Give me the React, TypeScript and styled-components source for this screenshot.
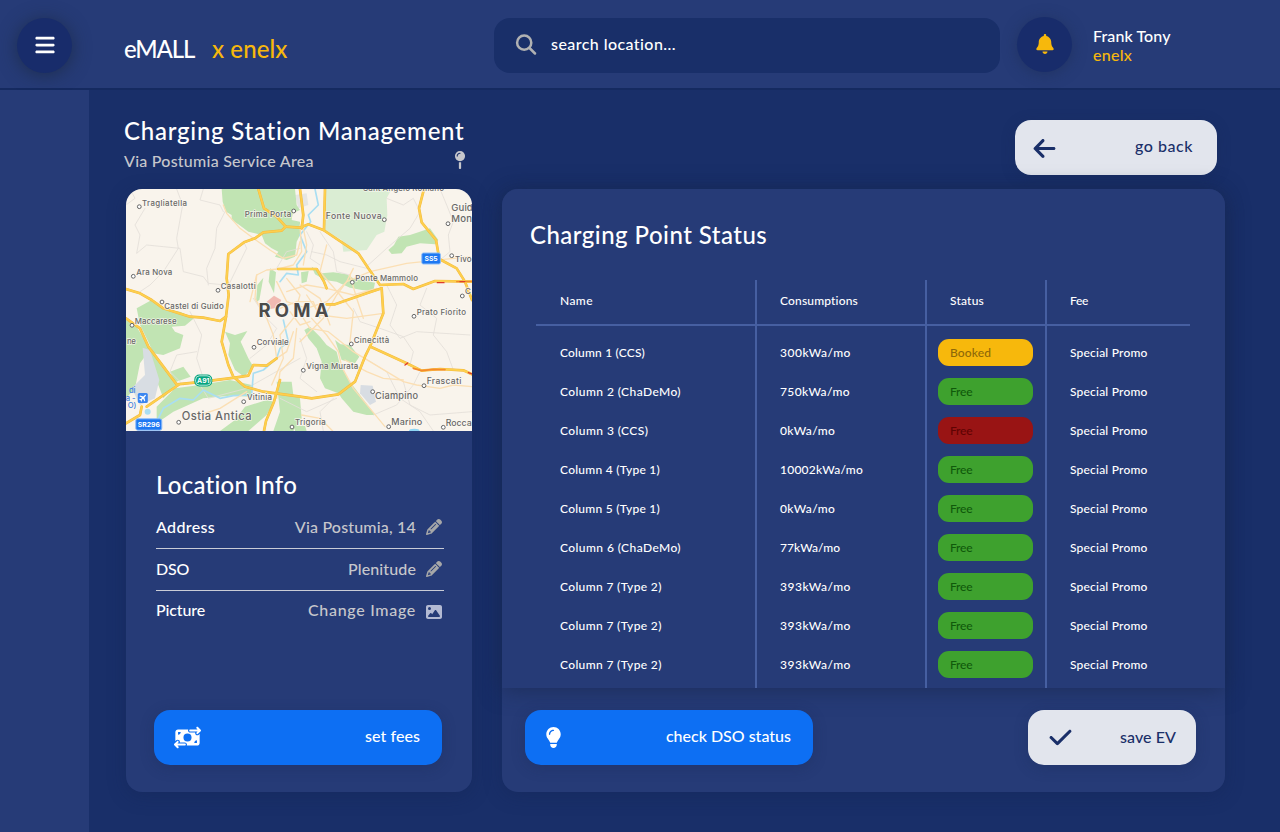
import React from 'react';
import styled, { createGlobalStyle, css } from 'styled-components';
import {
  FaBars,
  FaBell,
  FaArrowLeft,
  FaMapPin,
  FaPencil,
  FaImage,
  FaMoneyBillTransfer,
  FaLightbulb,
  FaCheck,
} from 'react-icons/fa6';

const color = {
  page: '#192f69',
  panel: '#263b77',
  disc: '#182c6b',
  blue: '#0d6ff3',
  light: '#e2e5ed',
  yellow: '#f7b80c',
  green: '#3ea12e',
  red: '#991414',
  line: '#465fa1',
  muted: '#c6c7cc',
};

const GlobalStyle = createGlobalStyle`
  * { box-sizing: border-box; }
  body {
    margin: 0;
    background: ${color.page};
    color: #fff;
    font-family: Lato, 'Open Sans', sans-serif;
    font-weight: 500;
    font-variant-ligatures: none;
    overflow: hidden;
  }
  svg { display: block; flex: none; }
`;

const Screen = styled.div`
  display: flex;
  flex-direction: column;
  width: 1280px;
  height: 832px;
`;

/* Header */

const Header = styled.header`
  display: flex;
  align-items: flex-start;
  height: 90px;
  padding: 17px 0 0 17px;
  background: ${color.panel};
  border-bottom: 2px solid #152a60;
`;

const RoundButton = styled.button<{ $strong?: boolean; $tint?: string }>`
  display: flex;
  align-items: center;
  justify-content: center;
  width: 55px;
  height: 55px;
  padding: 0 0 1px;
  border: 0;
  border-radius: 50%;
  background: ${color.disc};
  color: ${p => p.$tint ?? '#fff'};
  ${p =>
    p.$strong
      ? css`
          margin-top: 1px;
          padding-bottom: 2px;
          box-shadow: 0 2px 18px rgba(28, 44, 72, 0.85);
        `
      : css`
          box-shadow: 0 2px 14px rgba(28, 44, 80, 0.5);
        `}
`;

const Brand = styled.div`
  display: flex;
  width: 370px;
  margin: 17px 0 0 52px;
  font-size: 24px;
  line-height: 30px;
`;

const BrandName = styled.span`
  width: 88px;
  letter-spacing: -1.1px;
`;

const BrandPartner = styled.span`
  color: ${color.yellow};
  letter-spacing: 0.1px;
`;

const SearchBox = styled.label`
  display: flex;
  align-items: center;
  width: 506px;
  height: 55px;
  margin: 1px 17px 0 0;
  padding: 0 0 2px 21px;
  gap: 14px;
  border-radius: 16px;
  background: ${color.page};
  font-size: 16px;
  line-height: 20px;
  letter-spacing: 0.43px;
`;

const SearchHint = styled.span`
  padding-bottom: 1px;
`;

const User = styled.div`
  margin: 9px 0 0 21px;
  font-size: 16px;
  line-height: 19px;
`;

const UserName = styled.div`
  letter-spacing: 0.1px;
`;

const UserCompany = styled.div`
  color: ${color.yellow};
  letter-spacing: 0.26px;
`;

/* Page */

const Body = styled.div`
  display: flex;
  flex: 1;
`;

const Sidebar = styled.aside`
  width: 89px;
  background: ${color.panel};
`;

const Main = styled.main`
  flex: 1;
  padding: 26px 55px 0 37px;
`;

const TitleBar = styled.div`
  display: flex;
  justify-content: space-between;
  height: 73px;
  padding-right: 8px;
`;

const TitleBlock = styled.div`
  width: 342px;
  margin-left: -2px;
`;

const PageTitle = styled.h1`
  margin: 0;
  font-size: 24px;
  font-weight: 500;
  line-height: 30px;
  letter-spacing: 0.76px;
  white-space: nowrap;
`;

const Subtitle = styled.div`
  display: flex;
  align-items: center;
  justify-content: space-between;
  margin-top: 5px;
  color: ${color.muted};
  font-size: 16px;
  line-height: 20px;
  letter-spacing: 0.24px;

  svg { margin: -3px -3px 0 0; }
`;

const GoBackSlot = styled.div`
  padding-top: 4px;
`;

const Button = styled.button<{ $tone: 'blue' | 'light'; $width: number; $track?: number; $pad?: string }>`
  display: flex;
  align-items: center;
  justify-content: space-between;
  width: ${p => p.$width}px;
  height: 55px;
  padding: ${p => p.$pad ?? '0 22px 0 20px'};
  border: 0;
  border-radius: 16px;
  background: ${p => (p.$tone === 'blue' ? color.blue : color.light)};
  color: ${p => (p.$tone === 'blue' ? '#fff' : '#1a2f69')};
  box-shadow: 0 3px 14px rgba(24, 40, 84, 0.3);
  font: 500 16px/20px Lato, sans-serif;
  letter-spacing: ${p => p.$track ?? 0}px;
`;

const ButtonLabel = styled.span<{ $lift?: number }>`
  padding-bottom: ${p => p.$lift ?? 3}px;
`;

const Panels = styled.div`
  display: flex;
  gap: 30px;
`;

const SectionTitle = styled.h2<{ $track: number }>`
  margin: 0;
  font-size: 24px;
  font-weight: 500;
  line-height: 30px;
  letter-spacing: ${p => p.$track}px;
`;

/* Location panel */

const LocationPanel = styled.section`
  width: 346px;
  height: 603px;
  border-radius: 16px;
  background: ${color.panel};
  box-shadow: 0 4px 18px rgba(20, 38, 84, 0.4);
`;

const MapFrame = styled.div`
  height: 242px;
  overflow: hidden;
  border-radius: 16px 16px 0 0;
`;

const LocationContent = styled.div`
  display: flex;
  flex-direction: column;
  height: 361px;
  padding: 39px 28px 27px 30px;
`;

const InfoList = styled.div`
  flex: 1;
  margin-top: 7px;
`;

const InfoRow = styled.div`
  display: flex;
  align-items: center;
  height: 42px;
  padding: 0 2px 1px 0;
  border-bottom: 1px solid #c9ccd6;
  font-size: 16px;
  line-height: 20px;

  &:last-child {
    padding-bottom: 4px;
    border-bottom: 0;
  }

  &:last-child svg { margin-top: 3px; }
`;

const InfoLabel = styled.span<{ $track: number }>`
  flex: 1;
  letter-spacing: ${p => p.$track}px;
`;

const InfoValue = styled.span<{ $track: number }>`
  margin-right: 10px;
  color: ${color.muted};
  letter-spacing: ${p => p.$track}px;
`;

const EditIcon = styled.span<{ $tint: string }>`
  color: ${p => p.$tint};
`;

const FeesAction = styled.div`
  margin-left: -2px;
`;

/* Status panel */

const StatusPanel = styled.section`
  width: 723px;
  height: 603px;
  border-radius: 16px;
  background: ${color.panel};
  box-shadow: 0 4px 18px rgba(20, 38, 84, 0.4);
`;

const StatusCard = styled.div`
  height: 499px;
  padding: 31px 35px 0 28px;
  border-radius: 16px 16px 0 0;
  background: ${color.panel};
  box-shadow: 0 2px 22px rgba(23, 38, 76, 0.65);
`;

const Table = styled.div`
  width: 654px;
  margin: 30px 0 0 6px;
`;

const TableRow = styled.div<{ $kind?: 'head' | 'first' | 'last' }>`
  display: grid;
  grid-template-columns: 221px 170px 120px 143px;
  height: 39px;
  font-size: 12px;
  line-height: 16px;

  ${p => p.$kind === 'head' && css`
    height: 46px;
    border-bottom: 2px solid ${color.line};
    & > * { padding-bottom: 2px; }
  `}
  ${p => p.$kind === 'first' && css`
    height: 46px;
    & > * { padding-top: 7px; }
  `}
  ${p => p.$kind === 'last' && css`
    height: 43px;
    & > * { padding-bottom: 4px; }
  `}
`;

const Cell = styled.div<{ $track?: number; $inset?: number }>`
  display: flex;
  align-items: center;
  padding-left: ${p => p.$inset ?? 23}px;
  border-right: 2px solid ${color.line};
  letter-spacing: ${p => p.$track ?? 0.2}px;
  white-space: nowrap;

  &:last-child { border-right: 0; }
`;

const Pill = styled.span<{ $tone: 'green' | 'yellow' | 'red' }>`
  width: 95px;
  height: 27px;
  padding: 6px 12px;
  border-radius: 11px;
  background: ${p => color[p.$tone]};
  color: ${p => ({ green: '#10590b', yellow: '#8e6808', red: '#5f0303' })[p.$tone]};
  letter-spacing: ${p => (p.$tone === 'yellow' ? 0.12 : -0.2)}px;
`;

const Actions = styled.div`
  display: flex;
  justify-content: space-between;
  padding: 22px 29px 0 23px;
`;

/* Map */

const MapSvg = styled.svg`
  font-family: Inter, sans-serif;
  font-weight: 500;
`;

type Place = [name: string, x: number, y: number, width: number, size: number, dotX?: number, dotY?: number];

const places: Place[] = [
  ['Tragliatella', 16, 16.8, 45, 7.9, 13.3, 17.7],
  ['Prima Porta', 118.7, 28, 46.5, 7.9, 167.7, 22],
  ['Ara Nova', 10.3, 86, 36, 7.9, 7.3, 87.3],
  ['Casalotti', 94.7, 100, 35, 7.9, 92, 101.3],
  ['Castel di Guido', 38.3, 119.6, 59.4, 7.9, 36, 113],
  ['Fonte Nuova', 199.7, 29.7, 56, 8.6, 258.3, 30.7],
  ["Sant'Angelo Romano", 237, 1.8, 81, 8],
  ['Guid', 325.3, 22.3, 21.5, 9.6],
  ['Mon', 325.3, 32.5, 20.7, 9.6, 322, 34.7],
  ['Tivo', 329, 73.3, 16.5, 8, 325.7, 66.7],
  ['Ponte Mammolo', 229.3, 91.7, 62.7, 7.9, 226.3, 93.3],
  ['C', 339, 104.7, 6, 8, 336.3, 107],
  ['Prato Fiorito', 290.7, 125.7, 49.3, 7.9, 288, 127.3],
  ['Cinecittà', 227.7, 153.7, 35.6, 7.9, 225.3, 155],
  ['Vigna Murata', 180.3, 179.7, 52, 7.9, 177.3, 181.3],
  ['Frascati', 300.7, 194.7, 34.6, 8.6, 298, 196.7],
  ['Ciampino', 249, 210, 43, 9.2, 246.7, 202.7],
  ['Marino', 265.3, 236, 31, 9, 262.7, 237.7],
  ['Rocca', 319.7, 236.8, 26, 8.8, 317.3, 238.3],
  ['Trigoria', 169, 236, 30.7, 7.9, 166, 238],
  ['Maccarese', 8.7, 134.7, 42, 7.9, 6, 136.3],
  ['ne', 1, 155.3, 9, 7.9],
  ['Corviale', 130.7, 156.3, 32, 7.9, 128, 158.3],
  ['Vitinia', 121, 210.6, 25, 7.9, 117.7, 212.7],
  ['Ostia Antica', 55.7, 230.8, 70, 11.2, 52.7, 233.3],
];

const woods = [
  '305,12 308,50 318,80 335,90 335,105 355,118 385,140 425,150 435,175 455,190 475,200 465,215 500,225 525,215 530,170 540,150 540,110 515,105 518,85 540,75 530,60 525,12',
  '805,195 822,180 835,155 870,150 895,142 930,130 955,165 945,178 900,175 860,185 845,205 815,207',
  '575,245 605,265 640,262 680,268 700,280 765,293 760,318 725,315 690,308 650,290 615,285 585,268',
  '543,262 566,258 560,290 545,295',
  '450,250 468,262 462,325 446,290',
  '430,278 418,345 408,352 412,300',
  '50,370 95,345 130,372 180,380 222,400 195,422 155,425 165,440 190,450 180,490 130,510 100,505 85,470 60,420',
  '18,405 50,425 85,485 170,598 130,640 100,560 85,500 60,535 45,610 18,640',
  '150,560 190,545 212,575 165,592',
  '315,440 345,450 382,438 362,470 385,520 400,545 372,575 345,555 325,510 330,475',
  '110,665 165,610 240,600 330,585 395,600 395,635 330,632 250,640 160,680 110,715',
  '300,738 345,705 375,665 440,645 462,650 440,690 385,738',
  '470,590 515,590 520,630 540,640 545,700 520,738 460,738 480,680',
  '553,435 570,425 600,455 620,480 650,500 660,540 690,590 765,690 740,690 700,680 665,640 655,625 615,610 600,580 605,530 590,490 565,460',
  '645,465 662,478 690,480 718,515 705,535 665,525',
  '525,722 555,722 560,738 525,738',
];

const lanes = [
  '75,70 45,120 60,150 50,205 80,180 130,185 180,190 190,260 250,275 265,295 318,300',
  '170,12 188,60 170,160 175,190 130,260 90,300 60,320',
  '315,80 290,130 285,190 260,250 265,300',
  '250,12 240,45 300,60 310,80',
  '326,300 380,190 372,172',
  '210,380 245,450 230,520 250,580',
  '230,500 170,510 150,560 190,600',
  '240,600 265,640 380,610 540,520',
  '30,12 45,40 18,60',
  '800,40 850,60 880,40 900,80 870,130 800,190 745,240',
  '960,12 980,60 1000,110 985,150 990,200 960,225',
  '800,300 830,360 810,420 840,460 890,440 1050,450',
  '920,310 900,360 950,400 940,450 980,500 1000,555',
  '700,370 720,410 780,430 850,455 880,500 870,540',
  '735,520 800,560 840,640 900,680 940,738',
  '640,640 600,680 610,738',
  '760,690 830,660 880,600 900,560',
  '850,590 870,660 930,690 1056,680',
  '560,140 580,180 570,220 600,240',
  '600,140 640,200 650,260 690,270',
  '575,200 620,210 660,230 740,250',
  '480,640 560,680 650,640',
  '400,340 440,400 470,430 440,480 390,520',
  '540,460 560,520 540,580 590,620',
  '470,250 500,200 540,190',
];

const streets = [
  '310,60 320,85 360,130 400,160 450,195 490,220 530,210 540,170',
  '390,350 410,270 440,255 475,252 520,240 545,200 540,120',
  '410,270 405,340 440,400 460,450 470,520 500,500 520,440',
  '575,400 620,450 655,500 665,545 700,610 795,725',
  '550,400 570,430 625,440 700,500 775,545 850,590 890,600 960,610 1000,600 1056,605',
  '675,525 740,560 790,580 850,585',
  '470,290 500,350 560,370 620,350 680,290 750,260 860,235 1050,215',
  '500,320 560,300 620,310 700,330 770,310',
  '500,280 540,330 520,400 480,450 490,520 455,600',
  '560,330 600,390 680,400 790,385',
  '620,180 600,260 660,330 700,380 690,470',
  '690,270 710,340 730,400',
  '540,300 600,340 630,420',
  '480,370 530,350 580,350 600,400',
  '510,380 540,420 570,410',
  '545,60 550,130 560,180 550,240',
  '700,250 680,290 650,330 610,400 540,470',
  '640,740 600,700 545,690',
  '240,690 300,670 380,620',
  '530,430 520,520 480,560 470,640',
];

const highways = [
  '415,12 432,70 470,95 497,125 540,128 565,118 610,135 715,205 745,250 780,300 850,297 880,312 945,288 1056,290',
  '497,125 485,137 430,142 405,160 372,172 325,207 320,280 326,330 318,395 305,470 325,540 340,575 375,605 430,620 540,635 575,640 655,628 705,590 735,515 752,480 790,385 785,310',
  '615,12 612,135',
  '912,12 897,70 905,112 948,165 958,222 1010,250 1035,290 1056,345',
  '785,310 740,325 645,358 620,358',
  '475,252 590,252 612,290 620,310',
  '18,400 60,430 85,485 170,598 230,592 345,578 385,572 400,540 440,542 470,520',
  '80,665 175,600',
  '752,485 860,535 905,557 960,552 1030,556 1056,568',
  '18,312 60,325 95,345 130,370 210,395 250,398 300,408 318,395',
  '480,585 462,650 438,708 432,738',
  '540,12 550,90 545,130',
  '18,715 60,690 65,665',
];

const rivers = [
  '585,12 595,60 565,90 572,110 540,150 560,200 530,240 535,270 500,265 480,290',
  '115,700 130,670 180,640 220,645 250,615 300,640 340,632 395,630 400,565 430,555 470,520 480,490 505,470 490,405',
];

const RomaMap = () => (
  <MapSvg width="346" height="242" viewBox="0 0 346 242" role="img" aria-label="Map of Roma">
    <rect width="346" height="242" fill="#f9f4ec" />
    <g transform="translate(-6 -4) scale(0.33333)" fill="none" strokeLinejoin="round" strokeLinecap="round">
      <polygon fill="#daedd3" points="615,12 815,12 800,40 802,90 793,140 770,150 740,195 670,200 665,165 612,135" />
      <polygon fill="#e6e6e3" points="525,30 560,25 565,60 535,70" />
      {woods.map(p => <polygon key={p} points={p} fill="#c1e4b3" />)}
      <polygon fill="#d8dde3" points="68,488 90,495 118,585 105,640 60,660 35,610 75,570" />
      <polygon fill="#d8dde3" points="722,600 758,602 768,650 750,660 720,625" />
      {lanes.map(p => <polyline key={p} points={p} stroke="#e3ded8" strokeWidth="2.5" />)}
      {rivers.map(p => <polyline key={p} points={p} stroke="#a9def2" strokeWidth="5" />)}
      <circle cx="83" cy="680" r="9" fill="#a9def2" />
      <ellipse cx="883" cy="738" rx="16" ry="7" fill="#8ed6f5" />
      {streets.map(p => <polyline key={p} points={p} stroke="#fbdfb4" strokeWidth="4" />)}
      {highways.map(p => <polyline key={p} points={p} stroke="#f3b83c" strokeWidth="8" />)}
      {highways.map(p => <polyline key={p} points={p} stroke="#fdcf4e" strokeWidth="5.5" />)}
      <polyline points="880,550 905,557 940,553 975,554" stroke="#f58a2c" strokeWidth="5" />
      <polyline points="1010,290 1056,289" stroke="#f08a2a" strokeWidth="4" />
      <path d="M952 293h20M1020 290h14M855 540l8 -6M1045 563l11 4" stroke="#dd3b2d" strokeWidth="4" />
      <polygon fill="#eda79f" fillOpacity=".75" points="440,350 462,332 484,345 474,368 450,372" />
    </g>
    {places.map(([name, x, y, width, size, dotX, dotY]) => (
      <g key={name}>
        {dotX !== undefined && <circle cx={dotX} cy={dotY} r="1.9" fill="#fff" stroke="#666" strokeWidth="1" />}
        <text
          x={x} y={y} fontSize={size} textLength={width} fill="#696867"
          stroke="#fbf8f2" strokeWidth="1.4" strokeOpacity=".8" paintOrder="stroke"
        >
          {name}
        </text>
      </g>
    ))}
    <text x="132.5" y="128.3" fontSize="18.5" fontWeight="700" textLength="70" fill="#4c4b4a" stroke="#fbf8f2" strokeWidth="1.5" paintOrder="stroke">
      ROMA
    </text>
    <g fontSize="6.8" fontWeight="700" fill="#fff" textAnchor="middle">
      <rect x="295.8" y="64" width="18.6" height="11" rx="1.5" fill="#1d78f2" stroke="#8dbdf8" />
      <text x="305.1" y="72">SS5</text>
      <rect x="68.3" y="185.5" width="18" height="12" rx="5" fill="#06a47f" />
      <rect x="69.6" y="186.8" width="15.4" height="9.4" rx="4" fill="none" stroke="#d9f5ec" strokeWidth=".8" />
      <text x="77.3" y="193.9">A91</text>
      <rect x="9.8" y="229.8" width="26" height="11.4" rx="2" fill="#1d78f2" stroke="#8dbdf8" />
      <text x="22.8" y="238">SR296</text>
    </g>
    <g fontSize="7.6" fill="#3d7fe0" textAnchor="end">
      <text x="9.5" y="204">di</text>
      <text x="9.5" y="211.7">a -</text>
      <text x="10.3" y="219.2">O)</text>
    </g>
    <rect x="11.8" y="204" width="10" height="10" rx="1.5" fill="#3b86f0" />
    <g transform="translate(16.8 209) rotate(45)" fill="#fff">
      <path d="M0 -4.2c.5 0 .7.6.7 1.200v1.500l3 1.800v.9l-3 -.9v1.800l1 .8v.7l-1.700 -.5l-1.700 .5v-.7l1 -.8v-1.800l-3 .9v-.9l3 -1.800v-1.500c0 -.6.2 -1.200.7 -1.200z" />
    </g>
  </MapSvg>
);

const SearchIcon = () => (
  <svg width="22" height="22" viewBox="0 0 22 22" fill="none" stroke="#b0b1b2" strokeWidth="2.5" strokeLinecap="round">
    <circle cx="9.2" cy="8.7" r="7.1" />
    <path d="M14.5 14L20 19.5" />
  </svg>
);

/* Data */

const info = [
  { label: 'Address', lt: 0.34, value: 'Via Postumia, 14', vt: 0.18, icon: <FaPencil size={16} />, tint: '#a6a7a8' },
  { label: 'DSO', lt: -0.24, value: 'Plenitude', vt: 0.12, icon: <FaPencil size={16} />, tint: '#a6a7a8' },
  { label: 'Picture', lt: -0.14, value: 'Change Image', vt: 0.7, icon: <FaImage size={16} />, tint: '#b3bad3' },
];

type Point = { name: string; nt: number; use: string; ut: number; tone: 'green' | 'yellow' | 'red'; status: string };

const points: Point[] = [
  { name: 'Column 1 (CCS)', nt: 0.18, use: '300kWa/mo', ut: 0.5, tone: 'yellow', status: 'Booked' },
  { name: 'Column 2 (ChaDeMo)', nt: 0.42, use: '750kWa/mo', ut: 0.4, tone: 'green', status: 'Free' },
  { name: 'Column 3 (CCS)', nt: 0.42, use: '0kWa/mo', ut: 0.4, tone: 'red', status: 'Free' },
  { name: 'Column 4 (Type 1)', nt: 0.25, use: '10002kWa/mo', ut: 0.24, tone: 'green', status: 'Free' },
  { name: 'Column 5 (Type 1)', nt: 0.25, use: '0kWa/mo', ut: 0.4, tone: 'green', status: 'Free' },
  { name: 'Column 6 (ChaDeMo)', nt: 0.42, use: '77kWa/mo', ut: 0.1, tone: 'green', status: 'Free' },
  { name: 'Column 7 (Type 2)', nt: 0.35, use: '393kWa/mo', ut: 0.5, tone: 'green', status: 'Free' },
  { name: 'Column 7 (Type 2)', nt: 0.35, use: '393kWa/mo', ut: 0.5, tone: 'green', status: 'Free' },
  { name: 'Column 7 (Type 2)', nt: 0.35, use: '393kWa/mo', ut: 0.5, tone: 'green', status: 'Free' },
];

const rowKind = (i: number) => (i === 0 ? 'first' : i === points.length - 1 ? 'last' : undefined);

export default function App() {
  return (
    <Screen>
      <GlobalStyle />
      <Header>
        <RoundButton $strong aria-label="Menu"><FaBars size={22} /></RoundButton>
        <Brand>
          <BrandName>eMALL</BrandName>
          <BrandPartner>x enelx</BrandPartner>
        </Brand>
        <SearchBox>
          <SearchIcon />
          <SearchHint>search location...</SearchHint>
        </SearchBox>
        <RoundButton $tint={color.yellow} aria-label="Notifications"><FaBell size={20} /></RoundButton>
        <User>
          <UserName>Frank Tony</UserName>
          <UserCompany>enelx</UserCompany>
        </User>
      </Header>
      <Body>
        <Sidebar />
        <Main>
          <TitleBar>
            <TitleBlock>
              <PageTitle>Charging Station Management</PageTitle>
              <Subtitle>
                <span>Via Postumia Service Area</span>
                <FaMapPin size={18} />
              </Subtitle>
            </TitleBlock>
            <GoBackSlot>
              <Button $tone="light" $width={202} $track={0.54} $pad="1px 24px 0 17px">
                <FaArrowLeft size={25} />
                <ButtonLabel $lift={4}>go back</ButtonLabel>
              </Button>
            </GoBackSlot>
          </TitleBar>
          <Panels>
            <LocationPanel>
              <MapFrame><RomaMap /></MapFrame>
              <LocationContent>
                <SectionTitle $track={0.25}>Location Info</SectionTitle>
                <InfoList>
                  {info.map(row => (
                    <InfoRow key={row.label}>
                      <InfoLabel $track={row.lt}>{row.label}</InfoLabel>
                      <InfoValue $track={row.vt}>{row.value}</InfoValue>
                      <EditIcon $tint={row.tint}>{row.icon}</EditIcon>
                    </InfoRow>
                  ))}
                </InfoList>
                <FeesAction>
                  <Button $tone="blue" $width={288} $track={0.07}>
                    <FaMoneyBillTransfer size={27} />
                    <ButtonLabel>set fees</ButtonLabel>
                  </Button>
                </FeesAction>
              </LocationContent>
            </LocationPanel>
            <StatusPanel>
              <StatusCard>
                <SectionTitle $track={0.47}>Charging Point Status</SectionTitle>
                <Table>
                  <TableRow $kind="head">
                    <Cell $inset={24} $track={0.43}>Name</Cell>
                    <Cell $track={0.16}>Consumptions</Cell>
                    <Cell>Status</Cell>
                    <Cell $track={-0.25}>Fee</Cell>
                  </TableRow>
                  {points.map((p, i) => (
                    <TableRow key={i} $kind={rowKind(i)}>
                      <Cell $inset={24} $track={p.nt}>{p.name}</Cell>
                      <Cell $track={p.ut}>{p.use}</Cell>
                      <Cell $inset={11}><Pill $tone={p.tone}>{p.status}</Pill></Cell>
                      <Cell $track={0.2}>Special Promo</Cell>
                    </TableRow>
                  ))}
                </Table>
              </StatusCard>
              <Actions>
                <Button $tone="blue" $width={288} $pad="0 22px 0 18px">
                  <FaLightbulb size={21} />
                  <ButtonLabel>check DSO status</ButtonLabel>
                </Button>
                <Button $tone="light" $width={168} $track={0.07} $pad="0 20px 0 20px">
                  <FaCheck size={25} />
                  <ButtonLabel $lift={1}>save EV</ButtonLabel>
                </Button>
              </Actions>
            </StatusPanel>
          </Panels>
        </Main>
      </Body>
    </Screen>
  );
}
